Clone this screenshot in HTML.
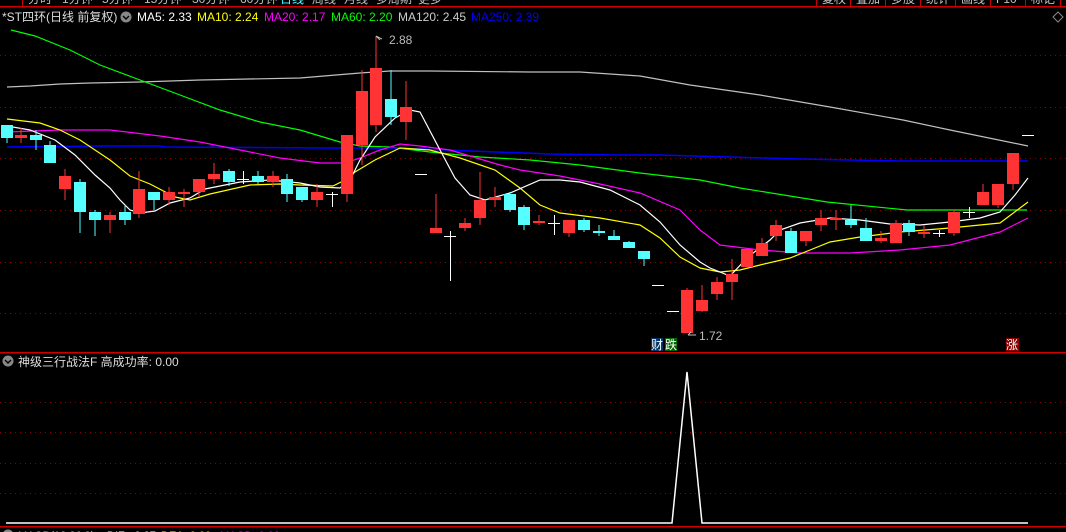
<!DOCTYPE html><html><head><meta charset="utf-8"><style>
html,body{margin:0;padding:0;background:#000;width:1066px;height:532px;overflow:hidden}
svg{display:block}
text{font-family:"Liberation Sans","Noto Sans CJK SC",sans-serif}
</style></head><body>
<svg width="1066" height="532" xmlns="http://www.w3.org/2000/svg">
<rect width="1066" height="532" fill="#000"/>
<g font-size="12" fill="#c0c0c0">
<text x="28" y="3">分时</text><text x="62" y="3">1分钟</text><text x="102" y="3">5分钟</text><text x="144" y="3">15分钟</text><text x="192" y="3">30分钟</text><text x="240" y="3">60分钟</text><text x="280" y="3" fill="#4ff">日线</text><text x="312" y="3">周线</text><text x="344" y="3">月线</text><text x="376" y="3">多周期</text><text x="418" y="3">更多</text>
<text x="822" y="3">复权</text><text x="856" y="3">叠加</text><text x="891" y="3">多股</text><text x="926" y="3">统计</text><text x="961" y="3">画线</text><text x="996" y="3">F10</text><text x="1031" y="3">标记</text>
</g>
<rect x="0" y="6" width="1066" height="1.5" fill="#c00"/>
<rect x="22" y="0" width="1" height="7" fill="#c00"/>
<g fill="#c00"><rect x="816" y="0" width="1" height="7"/><rect x="850" y="0" width="1" height="7"/><rect x="885" y="0" width="1" height="7"/><rect x="920" y="0" width="1" height="7"/><rect x="955" y="0" width="1" height="7"/><rect x="990" y="0" width="1" height="7"/><rect x="1025" y="0" width="1" height="7"/><rect x="1060" y="0" width="1" height="7"/></g>
<g font-size="12">
<text x="2" y="21" fill="#ddd">*ST四环(日线 前复权)</text>
<circle cx="126" cy="17" r="5.5" fill="#888"/><path d="M123 16l3 3 3-3" stroke="#000" stroke-width="1.4" fill="none"/>
<text x="137" y="21" fill="#fff">MA5: 2.33</text>
<text x="197" y="21" fill="#ff0">MA10: 2.24</text>
<text x="264" y="21" fill="#f0f">MA20: 2.17</text>
<text x="331" y="21" fill="#0f0">MA60: 2.20</text>
<text x="398" y="21" fill="#ccc">MA120: 2.45</text>
<text x="471" y="21" fill="#00f">MA250: 2.39</text>
</g>
<path d="M1053 17l5-5 5 5-5 5z" stroke="#888" fill="none"/>
<g stroke="#800" stroke-dasharray="1 4">
<line x1="0" y1="55.5" x2="1066" y2="55.5"/><line x1="0" y1="107.5" x2="1066" y2="107.5"/><line x1="0" y1="158.5" x2="1066" y2="158.5"/><line x1="0" y1="210.5" x2="1066" y2="210.5"/><line x1="0" y1="262.5" x2="1066" y2="262.5"/><line x1="0" y1="313.5" x2="1066" y2="313.5"/>
<line x1="0" y1="402.5" x2="1066" y2="402.5"/><line x1="0" y1="432.5" x2="1066" y2="432.5"/><line x1="0" y1="463.5" x2="1066" y2="463.5"/><line x1="0" y1="493.5" x2="1066" y2="493.5"/>
</g>
<g fill="none" stroke-width="1.2">
<polyline stroke="#c0c0c0" points="7,87 30,86 60,84 90,83 140,82 200,80 300,78 360,73 390,71 430,71 530,72 580,72 640,76 690,85 760,95 830,107 903,120 950,130 1028,146"/>
<polyline stroke="#0f0" points="11,30 35,36 70,50 100,65 140,80 180,95 220,110 260,122 300,130 340,142 360,146 390,147 430,152 480,157 530,160 580,165 640,173 700,180 740,188 827,202 907,210 1027,210"/>
<polyline stroke="#00f" stroke-width="1.5" points="7,147 100,146 160,146 165,147 330,148 400,148 470,151 550,154 620,155 660,155 730,157 800,159 900,161 945,161 1028,161"/>
<polyline stroke="#f0f" points="7,132 60,130 110,130 160,136 200,142 240,150 280,158 320,163 345,163 360,158 380,150 400,144 420,146 450,150 500,165 520,170 560,176 600,184 640,193 680,210 700,230 720,245 760,250 800,253 850,253 900,250 950,245 1000,232 1028,218"/>
<polyline stroke="#ff0" points="7,119 40,123 60,130 80,140 110,160 130,176 150,184 175,197 190,200 210,194 250,185 280,184 300,185 333,186 345,180 355,172 375,160 400,148 430,150 460,158 495,170 520,188 540,205 560,213 600,218 640,225 660,238 680,257 700,268 720,272 740,270 760,265 790,258 810,250 830,242 860,237 900,232 950,228 1000,223 1028,202"/>
<polyline stroke="#fff" points="7,126 30,130 55,140 75,155 95,175 110,188 120,200 130,210 140,213 155,211 170,203 190,198 205,189 220,186 240,182 270,180 300,183 320,187 340,188 350,180 360,160 375,137 395,118 410,110 420,112 440,150 455,178 470,195 485,200 510,193 540,180 560,180 580,182 610,190 640,205 660,222 680,245 700,262 710,268 730,276 748,257 770,240 780,230 800,223 830,218 860,220 890,224 920,225 950,222 980,218 1000,212 1015,195 1028,178"/>
</g>
<g fill="#5ff" stroke="#5ff">
<line x1="7" y1="125" x2="7" y2="143"/><rect x="1" y="125" width="12" height="13" stroke="none"/>
<line x1="36" y1="130" x2="36" y2="150"/><rect x="30" y="135" width="12" height="5" stroke="none"/>
<line x1="50" y1="141" x2="50" y2="163"/><rect x="44" y="145" width="12" height="18" stroke="none"/>
<line x1="80" y1="179" x2="80" y2="233"/><rect x="74" y="182" width="12" height="30" stroke="none"/>
<line x1="95" y1="210" x2="95" y2="236"/><rect x="89" y="212" width="12" height="8" stroke="none"/>
<line x1="125" y1="205" x2="125" y2="225"/><rect x="119" y="212" width="12" height="8" stroke="none"/>
<line x1="154" y1="192" x2="154" y2="210"/><rect x="148" y="192" width="12" height="8" stroke="none"/>
<line x1="229" y1="169" x2="229" y2="186"/><rect x="223" y="171" width="12" height="11" stroke="none"/>
<line x1="258" y1="171" x2="258" y2="184"/><rect x="252" y="176" width="12" height="6" stroke="none"/>
<line x1="287" y1="174" x2="287" y2="202"/><rect x="281" y="179" width="12" height="15" stroke="none"/>
<line x1="302" y1="187" x2="302" y2="202"/><rect x="296" y="187" width="12" height="13" stroke="none"/>
<line x1="391" y1="70" x2="391" y2="125"/><rect x="385" y="99" width="12" height="18" stroke="none"/>
<line x1="510" y1="192" x2="510" y2="212"/><rect x="504" y="194" width="12" height="16" stroke="none"/>
<line x1="524" y1="205" x2="524" y2="230"/><rect x="518" y="207" width="12" height="18" stroke="none"/>
<line x1="584" y1="218" x2="584" y2="232"/><rect x="578" y="220" width="12" height="10" stroke="none"/>
<line x1="599" y1="225" x2="599" y2="236"/><rect x="593" y="231" width="12" height="2" stroke="none"/>
<line x1="614" y1="230" x2="614" y2="240"/><rect x="608" y="236" width="12" height="4" stroke="none"/>
<line x1="629" y1="241" x2="629" y2="248"/><rect x="623" y="242" width="12" height="6" stroke="none"/>
<line x1="644" y1="251" x2="644" y2="266"/><rect x="638" y="251" width="12" height="8" stroke="none"/>
<line x1="791" y1="228" x2="791" y2="253"/><rect x="785" y="231" width="12" height="22" stroke="none"/>
<line x1="851" y1="205" x2="851" y2="228"/><rect x="845" y="220" width="12" height="5" stroke="none"/>
<line x1="866" y1="218" x2="866" y2="241"/><rect x="860" y="228" width="12" height="13" stroke="none"/>
<line x1="909" y1="220" x2="909" y2="236"/><rect x="903" y="223" width="12" height="9" stroke="none"/>
</g>
<g fill="#f33" stroke="#f33">
<line x1="21" y1="128" x2="21" y2="143"/><rect x="15" y="135" width="12" height="3" stroke="none"/>
<line x1="65" y1="169" x2="65" y2="200"/><rect x="59" y="176" width="12" height="13" stroke="none"/>
<line x1="110" y1="212" x2="110" y2="233"/><rect x="104" y="215" width="12" height="5" stroke="none"/>
<line x1="139" y1="171" x2="139" y2="218"/><rect x="133" y="189" width="12" height="25" stroke="none"/>
<line x1="169" y1="187" x2="169" y2="205"/><rect x="163" y="192" width="12" height="8" stroke="none"/>
<line x1="184" y1="189" x2="184" y2="207"/><rect x="178" y="192" width="12" height="2" stroke="none"/>
<line x1="199" y1="179" x2="199" y2="197"/><rect x="193" y="179" width="12" height="13" stroke="none"/>
<line x1="214" y1="163" x2="214" y2="184"/><rect x="208" y="174" width="12" height="5" stroke="none"/>
<line x1="273" y1="171" x2="273" y2="187"/><rect x="267" y="176" width="12" height="6" stroke="none"/>
<line x1="317" y1="184" x2="317" y2="207"/><rect x="311" y="192" width="12" height="8" stroke="none"/>
<line x1="347" y1="135" x2="347" y2="202"/><rect x="341" y="135" width="12" height="59" stroke="none"/>
<line x1="362" y1="70" x2="362" y2="165"/><rect x="356" y="91" width="12" height="54" stroke="none"/>
<line x1="376" y1="36" x2="376" y2="132"/><rect x="370" y="68" width="12" height="57" stroke="none"/>
<line x1="406" y1="81" x2="406" y2="140"/><rect x="400" y="107" width="12" height="15" stroke="none"/>
<line x1="436" y1="194" x2="436" y2="233"/><rect x="430" y="228" width="12" height="5" stroke="none"/>
<line x1="465" y1="218" x2="465" y2="231"/><rect x="459" y="223" width="12" height="5" stroke="none"/>
<line x1="480" y1="172" x2="480" y2="225"/><rect x="474" y="200" width="12" height="18" stroke="none"/>
<line x1="495" y1="187" x2="495" y2="207"/><rect x="489" y="197" width="12" height="3" stroke="none"/>
<line x1="539" y1="215" x2="539" y2="225"/><rect x="533" y="221" width="12" height="2" stroke="none"/>
<line x1="569" y1="220" x2="569" y2="237"/><rect x="563" y="220" width="12" height="13" stroke="none"/>
<line x1="687" y1="288" x2="687" y2="333"/><rect x="681" y="290" width="12" height="43" stroke="none"/>
<line x1="702" y1="285" x2="702" y2="312"/><rect x="696" y="300" width="12" height="11" stroke="none"/>
<line x1="717" y1="277" x2="717" y2="300"/><rect x="711" y="282" width="12" height="12" stroke="none"/>
<line x1="732" y1="259" x2="732" y2="300"/><rect x="726" y="274" width="12" height="8" stroke="none"/>
<line x1="747" y1="249" x2="747" y2="268"/><rect x="741" y="249" width="12" height="18" stroke="none"/>
<line x1="762" y1="238" x2="762" y2="256"/><rect x="756" y="243" width="12" height="13" stroke="none"/>
<line x1="776" y1="220" x2="776" y2="241"/><rect x="770" y="225" width="12" height="11" stroke="none"/>
<line x1="806" y1="231" x2="806" y2="246"/><rect x="800" y="231" width="12" height="10" stroke="none"/>
<line x1="821" y1="210" x2="821" y2="231"/><rect x="815" y="218" width="12" height="7" stroke="none"/>
<line x1="836" y1="210" x2="836" y2="230"/><rect x="830" y="218" width="12" height="2" stroke="none"/>
<line x1="881" y1="231" x2="881" y2="243"/><rect x="875" y="238" width="12" height="3" stroke="none"/>
<line x1="896" y1="220" x2="896" y2="243"/><rect x="890" y="223" width="12" height="20" stroke="none"/>
<line x1="924" y1="225" x2="924" y2="238"/><rect x="918" y="232" width="12" height="2" stroke="none"/>
<line x1="954" y1="210" x2="954" y2="236"/><rect x="948" y="212" width="12" height="21" stroke="none"/>
<line x1="983" y1="184" x2="983" y2="205"/><rect x="977" y="192" width="12" height="13" stroke="none"/>
<line x1="998" y1="184" x2="998" y2="208"/><rect x="992" y="184" width="12" height="21" stroke="none"/>
<line x1="1013" y1="153" x2="1013" y2="190"/><rect x="1007" y="153" width="12" height="31" stroke="none"/>
</g>
<g stroke="#fff">
<line x1="237" y1="179.5" x2="249" y2="179.5"/><line x1="243.5" y1="171" x2="243.5" y2="184"/>
<line x1="326" y1="194.5" x2="338" y2="194.5"/><line x1="332.5" y1="192" x2="332.5" y2="207"/>
<line x1="415" y1="174.5" x2="427" y2="174.5"/>
<line x1="444" y1="236.5" x2="456" y2="236.5"/><line x1="450.5" y1="231" x2="450.5" y2="281"/>
<line x1="548" y1="223.5" x2="560" y2="223.5"/><line x1="554.5" y1="215" x2="554.5" y2="235"/>
<line x1="652" y1="285.5" x2="664" y2="285.5"/>
<line x1="667" y1="311.5" x2="679" y2="311.5"/>
<line x1="933" y1="233.5" x2="945" y2="233.5"/><line x1="939.5" y1="230" x2="939.5" y2="237"/>
<line x1="963" y1="212.5" x2="975" y2="212.5"/><line x1="969.5" y1="207" x2="969.5" y2="218"/>
<line x1="1022" y1="135.5" x2="1034" y2="135.5"/>
</g>
<g font-size="12" fill="#bbb">
<path d="M376 36l4 4M376 36l6 3" stroke="#bbb" fill="none"/><text x="389" y="44">2.88</text>
<path d="M688 335l8 0M688 335l3-3" stroke="#bbb" fill="none"/><text x="699" y="340">1.72</text>
</g>
<rect x="651" y="338" width="12" height="13" fill="#036"/><text x="651" y="349" font-size="12" fill="#fff">财</text>
<rect x="665" y="338" width="12" height="13" fill="#060"/><text x="665" y="349" font-size="12" fill="#fff">跌</text>
<rect x="1006" y="338" width="13" height="13" fill="#800"/><text x="1006" y="349" font-size="12" fill="#fff">涨</text>
<rect x="0" y="352" width="1066" height="1.5" fill="#c00"/>
<circle cx="8" cy="361" r="5.5" fill="#888"/><path d="M5 360l3 3 3-3" stroke="#000" stroke-width="1.4" fill="none"/>
<text x="18" y="366" font-size="12" fill="#ddd">神级三行战法F  高成功率: 0.00</text>
<polyline fill="none" stroke="#fff" stroke-width="1.5" points="6,523 672,523 687,372 702,523 1028,523"/>
<rect x="0" y="526" width="1066" height="1.5" fill="#c00"/>
<circle cx="8" cy="535" r="5.5" fill="#888"/>
<g font-size="11"><text x="18" y="539" fill="#ccc">MACD(12,26,9)</text><text x="107" y="539" fill="#fff">DIF: -0.07</text><text x="161" y="539" fill="#ff0">DEA: 0.00</text><text x="220" y="539" fill="#f0f">MACD: 0.00</text></g>
</svg>
</body></html>
